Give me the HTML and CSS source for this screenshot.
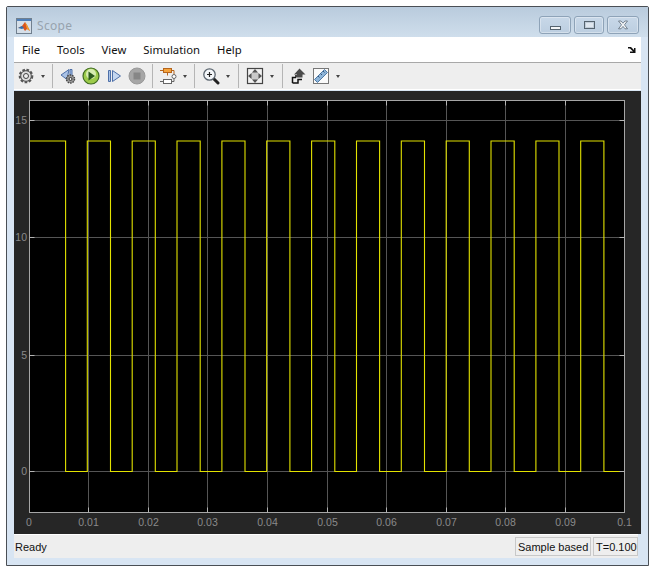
FILE: index.html
```html
<!doctype html>
<html lang="en">
<head>
  <meta charset="UTF-8" />
  <title>Scope</title>
  <link rel="stylesheet" href="styles.css">
</head>
<body>
  <main class="window">
    <header class="titlebar">
      <svg class="app-icon" width="16" height="16" viewBox="0 0 16 16">
        <rect x="0.500" y="0.500" width="15" height="15" fill="#d5dfe9" stroke="#71808f"/>
        <rect x="1" y="1" width="14" height="2" fill="#4f7fb8"/>
        <path d="M2 10l4-2 3-4 2 3 3 6-3-2-2 2-2-3z" fill="#d9541e"/>
        <path d="M2 10l4-2 2 2-2 1z" fill="#2f6fb0"/>
        <path d="M9 4l2 3 3 6-3-2z" fill="#f0a02c"/>
      </svg>
      <span class="title">Scope</span>
      <div class="win-buttons">
        <div class="win-btn win-min"><span></span></div>
        <div class="win-btn win-max"><span></span></div>
        <div class="win-btn win-close">
          <svg width="12" height="10" viewBox="0 0 12 10"><path d="M1.500 1h2.500l2 2.200 2-2.200h2.500l-3 3.800 3 4h-2.500l-2-2.400-2 2.400h-2.500l3-4z" fill="#f4f6f8" stroke="#5c6b7a" stroke-width=".8"/></svg>
        </div>
      </div>
    </header>

    <div class="inner">
      <nav class="menubar">
        <span>File</span>
        <span>Tools</span>
        <span>View</span>
        <span>Simulation</span>
        <span>Help</span>
        <svg class="dock" width="8" height="7" viewBox="0 0 8 7"><path d="M0 1h3l3 3V2h1.500v5H2V5.500h3L2 2.500H0z" fill="#111"/></svg>
      </nav>

      <div class="toolbar">
        <div class="group first">
          <svg class="tool" viewBox="0 0 18 18">
            <circle cx="9" cy="9" r="6" fill="#bbb" stroke="#555" stroke-width="2.600" stroke-dasharray="2.500 1.500"/>
            <circle cx="9" cy="9" r="5.300" fill="#ddd" stroke="#555"/>
            <circle cx="9" cy="9" r="2.500" fill="#eee" stroke="#444"/>
          </svg>
          <i class="caret"></i>
        </div>
        <div class="group sep">
          <svg class="tool" viewBox="0 0 18 18">
            <path d="M10 2.500L2 8l6 4.500zM11 2.500h2v6h-2z" fill="#a9c2e6" stroke="#4d6fa8"/>
            <circle cx="11.500" cy="12" r="4" fill="#999" stroke="#444" stroke-width="1.500" stroke-dasharray="1.500 1"/>
            <circle cx="11.500" cy="12" r="1.500" fill="#eee" stroke="#333"/>
          </svg>
          <svg class="tool" viewBox="0 0 18 18">
            <circle cx="9" cy="9" r="8" fill="#9ccb4a" stroke="#3e6a22" stroke-width="1.200"/>
            <circle cx="9" cy="7" r="5" fill="#d6edb0"/>
            <path d="M6.500 4.500L13 9l-6.500 4.500z" fill="#2b5a1c"/>
          </svg>
          <svg class="tool" viewBox="0 0 18 18">
            <path d="M3.500 3.500h2v11h-2z" fill="#a9c2e6" stroke="#4d6fa8"/>
            <path d="M7.500 3.500L15.500 9l-8 5.500z" fill="#c3d6f0" stroke="#4d6fa8"/>
          </svg>
          <svg class="tool" viewBox="0 0 18 18">
            <circle cx="9" cy="9" r="8" fill="#a6a6a6" stroke="#999"/>
            <rect x="5.500" y="5.500" width="7" height="7" fill="#868686"/>
          </svg>
        </div>
        <div class="group sep">
          <svg class="tool" viewBox="0 0 18 18">
            <rect x="4.500" y="1.500" width="8" height="4" fill="#f5a33c" stroke="#b5651d"/>
            <path d="M1 3.500h3.500M12.500 3.500h2.500v4M8.500 5.500v3" stroke="#b5651d" fill="none"/>
            <circle cx="15" cy="9.500" r="2" fill="#fff" stroke="#666"/>
            <rect x="4.500" y="12.500" width="8" height="4" fill="#fff" stroke="#666"/>
            <path d="M1 14.500h3.500M12.500 14.500h2.500v-3" stroke="#666" fill="none"/>
          </svg>
          <i class="caret"></i>
        </div>
        <div class="group wide sep">
          <svg class="tool" viewBox="0 0 18 18">
            <path d="M11 11l5 5" stroke="#222" stroke-width="3" stroke-linecap="round"/>
            <circle cx="7.500" cy="7.500" r="5.700" fill="#f4f7fa" stroke="#5c6670" stroke-width="1.300"/>
            <path d="M5 7.500h5M7.500 5v5" stroke="#222" stroke-width="1.200"/>
          </svg>
          <i class="caret"></i>
        </div>
        <div class="group wide sep">
          <svg class="tool" viewBox="0 0 18 18">
            <rect x="1.500" y="1.500" width="15" height="15" fill="#f2f2f2" stroke="#444" stroke-width="1.200"/>
            <circle cx="9" cy="9" r="4.500" fill="#c9c9c9"/>
            <path d="M9 2l3 3.500H6zM9 16l3-3.500H6zM2 9l3.500-3v6zM16 9l-3.500-3v6z" fill="#555"/>
          </svg>
          <i class="caret"></i>
        </div>
        <div class="group last">
          <svg class="tool" viewBox="0 0 18 18">
            <path d="M10.500 1.500L16.500 7.500H13.500V10.500H8V7.500H5z" fill="#4a4a4a"/>
            <path d="M3.500 16V10.500H7M7 10.500V8M3.500 16H9V12.500H13" fill="none" stroke="#111" stroke-width="1.500"/>
          </svg>
          <svg class="tool" viewBox="0 0 18 18">
            <rect x="1.500" y="1.500" width="15" height="15" fill="#fafafa" stroke="#777"/>
            <path d="M2.500 12.500L12.500 2.500l3 3-10 10z" fill="#8db4d8" stroke="#4f7aa6"/>
            <path d="M6 9l1.500 1.500M8.500 6.500L10 8M11 4l1.500 1.500" stroke="#33557a"/>
          </svg>
          <i class="caret"></i>
        </div>
      </div>

      <section class="plot">
        <svg class="scope" width="627" height="443" viewBox="0 0 627 443">
          <rect x="15.500" y="9.500" width="595" height="412" fill="#000"/>
          <path class="grid" d="M74.500 9.500V421.500M134.500 9.500V421.500M193.500 9.500V421.500M253.500 9.500V421.500M313.500 9.500V421.500M372.500 9.500V421.500M432.500 9.500V421.500M491.500 9.500V421.500M551.500 9.500V421.500M15.500 29.500H610.500M15.500 146.500H610.500M15.500 264.500H610.500M15.500 380.500H610.500"/>
          <polyline class="signal" points="15.500,50 51.600,50 51.600,380.500 73.300,380.500 73.300,50 96.500,50 96.500,380.500 118.200,380.500 118.200,50 141.300,50 141.300,380.500 163,380.500 163,50 186.200,50 186.200,380.500 207.900,380.500 207.900,50 231,50 231,380.500 252.700,380.500 252.700,50 275.900,50 275.900,380.500 297.600,380.500 297.600,50 320.800,50 320.800,380.500 342.500,380.500 342.500,50 365.600,50 365.600,380.500 387.300,380.500 387.300,50 410.500,50 410.500,380.500 432.200,380.500 432.200,50 455.300,50 455.300,380.500 477,380.500 477,50 500.200,50 500.200,380.500 521.900,380.500 521.900,50 545,50 545,380.500 566.700,380.500 566.700,50 589.900,50 589.900,380.500 610.500,380.500"/>
          <rect class="axes" x="15.500" y="9.500" width="595" height="412"/>
          <path class="ticks" d="M74.500 9.500v5M134.500 9.500v5M193.500 9.500v5M253.500 9.500v5M313.500 9.500v5M372.500 9.500v5M432.500 9.500v5M491.500 9.500v5M551.500 9.500v5M74.500 421.500v-5M134.500 421.500v-5M193.500 421.500v-5M253.500 421.500v-5M313.500 421.500v-5M372.500 421.500v-5M432.500 421.500v-5M491.500 421.500v-5M551.500 421.500v-5M15.500 29.500h5M15.500 146.500h5M15.500 264.500h5M15.500 380.500h5M610.500 29.500h-5M610.500 146.500h-5M610.500 264.500h-5M610.500 380.500h-5"/>
          <g class="ylabels">
            <text x="13" y="33">15</text>
            <text x="13" y="150">10</text>
            <text x="13" y="268">5</text>
            <text x="13" y="384">0</text>
          </g>
          <g class="xlabels">
            <text x="15" y="435">0</text>
            <text x="74.500" y="435">0.01</text>
            <text x="134.500" y="435">0.02</text>
            <text x="193.500" y="435">0.03</text>
            <text x="253.500" y="435">0.04</text>
            <text x="313.500" y="435">0.05</text>
            <text x="372.500" y="435">0.06</text>
            <text x="432.500" y="435">0.07</text>
            <text x="491.500" y="435">0.08</text>
            <text x="551.500" y="435">0.09</text>
            <text x="610.500" y="435">0.1</text>
          </g>
        </svg>
      </section>

      <footer class="statusbar">
        <span class="status-text">Ready</span>
        <span class="status-box box-mode">Sample based</span>
        <span class="status-box box-time">T=0.100</span>
      </footer>
    </div>
  </main>
</body>
</html>
```

FILE: styles.css
```css
* { box-sizing: border-box; }

body {
  margin: 0;
  background: #fff;
  font-family: "Liberation Sans", Arial, sans-serif;
}

.window {
  width: 643px;
  height: 560px;
  margin: 6px 0 0 6px;
  display: flex;
  flex-direction: column;
  border: 1px solid #4a4f55;
  border-radius: 2px 2px 0 0;
  background: #d8e5f3;
}

.titlebar {
  height: 30px;
  flex: none;
  display: flex;
  align-items: center;
  padding-left: 9px;
  background: linear-gradient(180deg, #b9cbdd, #cfdeec);
}

.app-icon {
  flex: none;
  margin-top: 7px;
}

.title {
  margin: 7px 0 0 5px;
  font-family: "Noto Sans", sans-serif;
  font-size: 12px;
  letter-spacing: .3px;
  color: #97a3ae;
}

.win-buttons {
  margin: 9px 9px 0 auto;
  display: flex;
  gap: 3px;
  align-self: flex-start;
}

.win-btn {
  width: 32px;
  height: 18px;
  display: flex;
  align-items: center;
  justify-content: center;
  border: 1px solid #8ea3b8;
  border-radius: 3px;
  background: linear-gradient(180deg, #c8d8e8, #bccee0);
  box-shadow: inset 0 0 0 1px rgba(255,255,255,.35);
}

.win-btn.win-max { width: 30px; }

.win-min span {
  width: 11px;
  height: 4px;
  margin-top: 5px;
  background: #f4f6f8;
  border: 1px solid #55636f;
}

.win-max span {
  width: 11px;
  height: 8px;
  background: #dfe7ef;
  border: 1px solid #55636f;
  box-shadow: inset 0 0 0 1px #c0ccd8;
}

.inner {
  margin: 0 7px;
  flex: 1;
  display: flex;
  flex-direction: column;
  min-height: 0;
}

.menubar {
  height: 26px;
  flex: none;
  display: flex;
  align-items: center;
  gap: 17px;
  padding: 0 4px 0 8px;
  background: #fff;
  border-bottom: 1px solid #a8a8a8;
  font-family: "Noto Sans", sans-serif;
  font-size: 11.300px;
  color: #111;
}

.dock { margin-left: auto; margin-right: 1px; }

.toolbar {
  height: 27px;
  flex: none;
  display: flex;
  align-items: center;
  background: #eee;
  border-bottom: 1px solid #fff;
}

.group {
  height: 24px;
  display: flex;
  align-items: center;
  gap: 5px;
  padding: 0 6px;
}

.group.first { padding-left: 3px; border-right: 1px solid #b5b5b5; }
.group.wide { padding: 0 7px; }
.group.sep { border-right: 1px solid #b5b5b5; }

.tool {
  width: 18px;
  height: 18px;
  flex: none;
}

.caret {
  width: 0;
  height: 0;
  flex: none;
  margin: 0 1px;
  border-left: 2.500px solid transparent;
  border-right: 2.500px solid transparent;
  border-top: 3px solid #444;
}

.plot {
  height: 443px;
  flex: none;
  margin-top: 1px;
  background: #262626;
}

.scope { display: block; }

.grid {
  fill: none;
  stroke: #555;
  stroke-width: 1;
}

.signal {
  fill: none;
  stroke: #e2e200;
  stroke-width: 1.100;
}

.axes {
  fill: none;
  stroke: #a6a6a6;
  stroke-width: 1;
}

.ticks {
  fill: none;
  stroke: #b4b4b4;
  stroke-width: 1;
}

.ylabels text, .xlabels text {
  font-family: "Liberation Sans", Arial, sans-serif;
  font-size: 10.500px;
  fill: #8a8a8a;
}

.ylabels text { text-anchor: end; }
.xlabels text { text-anchor: middle; }

.statusbar {
  height: 24px;
  flex: none;
  display: flex;
  align-items: center;
  gap: 2px;
  padding-left: 1px;
  margin-right: 3px;
  background: #eee;
  border-top: 1px solid #fff;
  font-size: 11px;
  color: #111;
}

.status-text { margin-right: auto; }

.status-box {
  height: 19px;
  display: flex;
  align-items: center;
  padding-left: 2px;
  border: 1px solid #c8c8c8;
  white-space: nowrap;
}

.box-mode { width: 76px; }
.box-time { width: 45px; }
```
